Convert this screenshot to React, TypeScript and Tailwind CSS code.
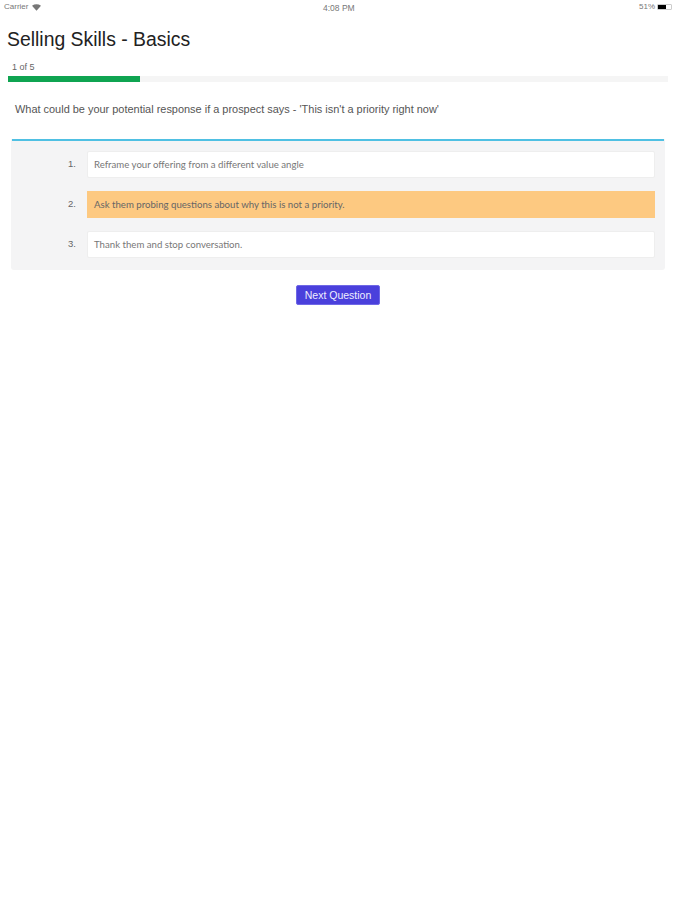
export default function App() {
  const options = [
    { n: "1.", text: "Reframe your offering from a different value angle", selected: false },
    { n: "2.", text: "Ask them probing questions about why this is not a priority.", selected: true },
    { n: "3.", text: "Thank them and stop conversation.", selected: false },
  ];
  return (
    <div className="w-[675px] h-[900px] bg-white flex flex-col font-['Liberation_Sans',sans-serif] overflow-hidden">
      <div className="h-[14px] pl-[4px] pr-[3px] flex items-center justify-between text-[8px] text-[#777] relative">
        <div className="flex items-center gap-[4px]">
          <span>Carrier</span>
          <svg width="9" height="7" viewBox="0 0 10 7"><path d="M0 1.5 C3 -0.5 7 -0.5 10 1.5 L5 7 Z" fill="#777" /></svg>
        </div>
        <span className="absolute left-[323px] top-[2px] text-[8.5px]">4:08 PM</span>
        <div className="flex items-center gap-[2px]">
          <span>51%</span>
          <div className="w-[15px] h-[6px] border border-[#ccc] rounded-[1px] flex">
            <div className="w-[8px] bg-black" />
          </div>
        </div>
      </div>
      <h1 className="mt-[12px] ml-[7px] text-[19.4px] leading-[26px] text-[#222]">Selling Skills - Basics</h1>
      <div className="mt-[9px] ml-[12px] text-[9px] leading-[12px] text-[#666]">1 of 5</div>
      <div className="mt-[3px] ml-[8px] w-[660px] h-[6px] bg-[#f5f5f5]">
        <div className="w-[132px] h-full bg-[#0fa451]" />
      </div>
      <p className="mt-[21px] ml-[15px] text-[10.95px] leading-[13px] text-[#555]">
        What could be your potential response if a prospect says - 'This isn't a priority right now'
      </p>
      <div className="mt-[23px] ml-[11px] w-[654px] h-[131px] bg-[#f4f4f5] rounded-b-[3px] flex flex-col">
        <div className="mx-[1px] h-[2px] bg-[#4fc0e3]" />
        <div className="flex flex-col gap-[13.5px] pt-[10px] pr-[10px]">
          {options.map((o) => (
            <div key={o.n} className="flex items-center h-[26.5px]">
              <span className="w-[65px] text-right text-[9.5px] text-[#666]">{o.n}</span>
              <div
                className={
                  o.selected
                    ? "ml-[11px] flex-1 h-full flex items-center pl-[7px] pr-[7px] bg-[#fdc981] text-[9.65px] font-['Lato',sans-serif] text-[#666]"
                    : "ml-[11px] flex-1 h-full flex items-center pl-[6px] pr-[7px] bg-white border border-[#eeeeee] rounded-[2px] text-[9.65px] font-['Lato',sans-serif] text-[#777]"
                }
              >
                {o.text}
              </div>
            </div>
          ))}
        </div>
      </div>
      <div className="mt-[15px] flex justify-center pl-[1px]">
        <button className="w-[84px] h-[20px] bg-[#4a40dc] border border-[#6f68e6] rounded-[2px] text-[#eeeeff] text-[10.5px] leading-[18px] flex items-center justify-center">
          Next Question
        </button>
      </div>
    </div>
  );
}
